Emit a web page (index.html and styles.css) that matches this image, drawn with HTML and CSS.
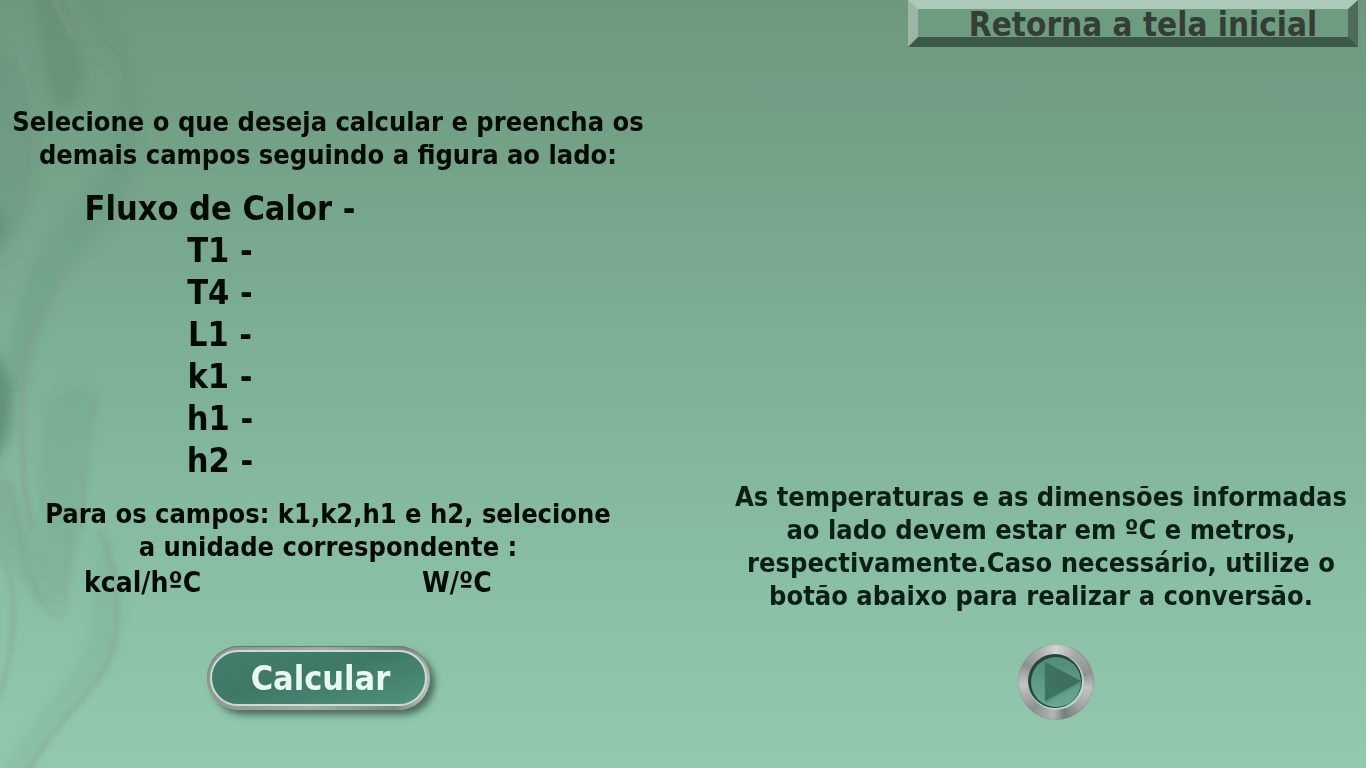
FILE: index.html
```html
<!DOCTYPE html>
<html lang="pt-BR">
<head>
<meta charset="utf-8">
<title>Fluxo de Calor</title>
<link rel="stylesheet" href="styles.css">
</head>
<body>
<svg class="waves" viewBox="0 0 240 768" preserveAspectRatio="xMinYMin slice" aria-hidden="true">
  <defs>
    <filter id="soft" x="-30%" y="-10%" width="160%" height="120%" color-interpolation-filters="sRGB"><feGaussianBlur stdDeviation="6"/></filter>
    <filter id="fine" x="-30%" y="-10%" width="160%" height="120%" color-interpolation-filters="sRGB"><feGaussianBlur stdDeviation="2"/></filter>
  </defs>
  <g filter="url(#soft)">
    <path d="M30 -20C44 35 42 85 56 110C68 112 88 95 82 65C78 40 62 20 56 -20Z" fill="#5d8a6d" opacity=".45"/>
    <path d="M74 -20C80 25 110 45 119 75C126 110 118 150 105 172C132 175 146 140 141 100C136 60 108 35 108 -20Z" fill="#629177" opacity=".32"/>
    <path d="M105 165C90 195 40 230 25 290C8 340 4 365 4 400L22 395C34 330 55 280 88 245C112 220 134 192 137 155Z" fill="#64987e" opacity=".35"/>
    <path d="M-20 35C24 60 46 120 36 175C28 225 8 250 -20 285Z" fill="#629078" opacity=".3"/>
    <path d="M-20 195C10 205 18 240 -20 260Z" fill="#4b8069" opacity=".35"/>
    <path d="M-20 340C24 370 20 450 -20 475Z" fill="#527f6a" opacity=".65"/>
    <path d="M48 400C62 378 94 380 98 394C90 420 82 480 80 520C75 560 70 590 60 608C46 595 34 530 40 470Z" fill="#6fa288" opacity=".35"/>
    <path d="M-10 468C18 480 25 525 40 545C50 570 47 602 58 612C34 610 17 575 -10 530Z" fill="#6f9f88" opacity=".32"/>
    <path d="M102 535C124 575 123 645 105 670C76 700 37 740 20 790H-10C18 735 61 697 84 652C100 625 90 580 102 535Z" fill="#74a990" opacity=".28"/>
  </g>
  <g filter="url(#fine)" fill="none" stroke="#869a8c" stroke-width="5">
    <path d="M52 -6C59 15 69 24 72 38" opacity=".5"/>
    <path d="M0 290C12 250 34 205 34 155C35 110 28 70 16 42" opacity=".32"/>
    <path d="M24 385C25 330 52 290 70 265C100 238 130 210 138 170" opacity=".4"/>
    <path d="M24 385C20 435 22 500 34 530" opacity=".55"/>
    <path d="M98 394C85 430 82 500 82 530" opacity=".35"/>
    <path d="M-4 550C18 575 20 640 -4 705" opacity=".35"/>
    <path d="M72 530C64 575 68 614 60 618C38 613 26 575 10 480L0 510" opacity=".35" stroke-width="3"/>
    <path d="M98 530C118 560 121 620 112 648C104 688 60 710 26 776" opacity=".4"/>
    <path d="M96 60C103 35 115 55 121 78" opacity=".25"/>
  </g>
</svg>
<header class="topbar">
  <button class="return" type="button">Retorna a tela inicial</button>
</header>
<main class="page">
  <section class="form">
    <p class="text intro">Selecione o que deseja calcular e preencha os<br>demais campos seguindo a figura ao lado:</p>
    <ul class="fields">
      <li>Fluxo de Calor -</li>
      <li>T1 -</li>
      <li>T4 -</li>
      <li>L1 -</li>
      <li>k1 -</li>
      <li>h1 -</li>
      <li>h2 -</li>
    </ul>
    <p class="text units-intro">Para os campos: k1,k2,h1 e h2, selecione<br>a unidade correspondente :</p>
    <div class="text units"><span>kcal/hºC</span><span>W/ºC</span></div>
    <button class="calc" type="button"><span class="calc-face">Calcular</span></button>
  </section>
  <section class="help">
    <p class="text note">As temperaturas e as dimensões informadas<br>ao lado devem estar em ºC e metros,<br>respectivamente.Caso necessário, utilize o<br>botão abaixo para realizar a conversão.</p>
    <button class="play" type="button" aria-label="Realizar a conversão">
      <svg viewBox="0 0 56 56" aria-hidden="true">
        <defs>
          <linearGradient id="disc" x1="0" y1="0" x2="0" y2="1"><stop offset="0" stop-color="#528b78"/><stop offset="1" stop-color="#69a98f"/></linearGradient>
          <linearGradient id="arrow" x1="0" y1="0" x2="1" y2="0"><stop offset="0" stop-color="#3e7462"/><stop offset="1" stop-color="#3f6b58"/></linearGradient>
          <filter id="edge"><feGaussianBlur stdDeviation="1"/></filter>
        </defs>
        <circle cx="28" cy="28" r="28" fill="#b9d5c9"/>
        <circle cx="27" cy="27" r="27" fill="#24473d"/>
        <circle cx="28" cy="28" r="25" fill="url(#disc)"/>
        <path d="M17 9L53 28L17 49Z" fill="#376453" opacity=".4" filter="url(#edge)"/>
        <path d="M17 8L53 27L17 47Z" fill="url(#arrow)"/>
      </svg>
    </button>
  </section>
</main>
</body>
</html>
```
FILE: styles.css
```css
* { box-sizing: border-box; }
html { min-height: 100%; }
body {
  margin: 0;
  min-height: 100vh;
  position: relative;
  overflow-x: hidden;
  font-family: "DejaVu Sans Condensed", "DejaVu Sans", sans-serif;
  font-weight: bold;
  color: #020a04;
  background: linear-gradient(#6d987e 0%, #75a489 24%, #7eb298 50%, #89bfa4 76%, #91c9af 100%);
}
.waves {
  position: absolute;
  left: 0;
  top: 0;
  width: 240px;
  height: 100%;
}
.topbar, .page { position: relative; }
.topbar {
  display: flex;
  justify-content: flex-end;
  padding-right: 8px;
}
.return {
  width: 450px;
  height: 47px;
  padding: 2px 0 0 20px;
  border-style: solid;
  border-width: 9px 10px 10px;
  border-color: #adc9b9 #4d6c5b #3c5947 #9bb5a6;
  background: #6e9c81;
  color: #343e34;
  font: inherit;
  font-size: 33px;
  line-height: 28px;
  white-space: nowrap;
}
.page {
  display: grid;
  grid-template-columns: 1fr 1fr;
}
.text {
  margin: 0;
  font-size: 27px;
  line-height: 33px;
  white-space: nowrap;
}
.form {
  display: flex;
  flex-direction: column;
  padding: 58px 27px 0 0;
}
.intro, .units-intro { text-align: center; }
.fields {
  list-style: none;
  margin: 16px 0;
  padding: 0;
  width: 440px;
  text-align: center;
  font-size: 34px;
  line-height: 42px;
}
.units {
  display: grid;
  grid-template-columns: 338px 1fr;
  margin-top: 3px;
  padding-left: 84px;
  font-size: 28px;
}
.calc {
  width: 223px;
  height: 64px;
  margin: 47px 0 0 207px;
  padding: 3px;
  border: 0;
  border-radius: 32px;
  background: linear-gradient(100deg, #8c9691, #a3aca7 50%, #7d8983 85%, #c0c8c4);
  box-shadow: 5px 5px 6px #3e5a4ecc, inset 0 1px 1px #66756d;
  color: #e9f7f3;
  font: inherit;
  font-size: 34px;
  line-height: 52px;
}
.calc-face {
  display: block;
  border: 2px solid #cddbd5;
  border-radius: 29px;
  padding-left: 4px;
  background: linear-gradient(165deg, #437c6b, #3e7967 45%, #4f927c);
}
.help {
  display: flex;
  flex-direction: column;
  padding: 433px 0 0 33px;
}
.note {
  text-align: center;
  color: #0c1f15;
}
.play {
  width: 76px;
  height: 76px;
  margin: 32px 0 0 302px;
  padding: 10px;
  border: 0;
  border-radius: 50%;
  background: conic-gradient(#d2d5d4, #a4a8a6 35deg, #8e9391 75deg, #c0c3c2 100deg, #a2a6a4 135deg, #777e7a 165deg, #b3b8b5 185deg, #8b918e 220deg, #c3c6c5 265deg, #8d9390 300deg, #b0b5b2 335deg, #d2d5d4);
  box-shadow: inset 0 0 2px #78827d;
}
.play svg { display: block; width: 56px; height: 56px; }
```
